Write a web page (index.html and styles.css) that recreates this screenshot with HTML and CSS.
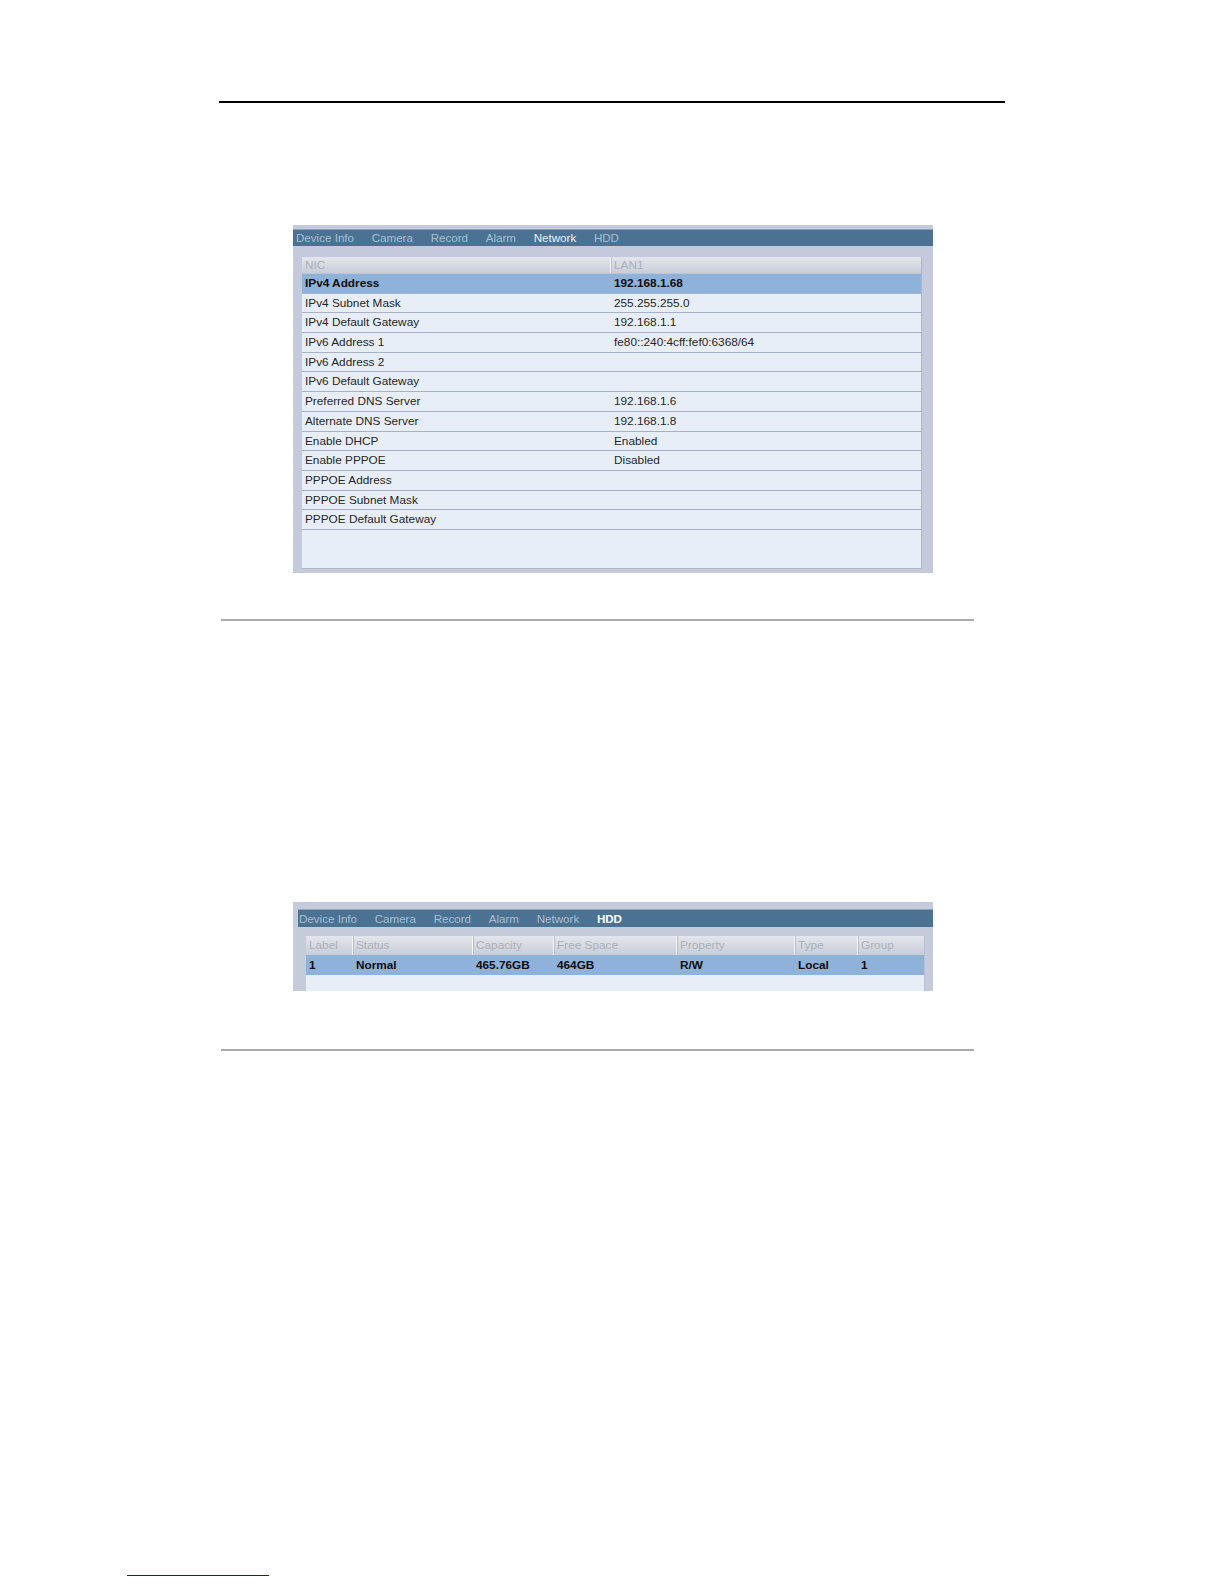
FILE: index.html
```html
<!DOCTYPE html>
<html>
<head>
<meta charset="utf-8">
<link rel="stylesheet" href="styles.css">
</head>
<body>
<div class="page">
  <div class="rule-top"></div>

  <div class="panel panel-net">
    <div class="tabs">
      <span class="tab">Device Info</span>
      <span class="tab">Camera</span>
      <span class="tab">Record</span>
      <span class="tab">Alarm</span>
      <span class="tab active">Network</span>
      <span class="tab">HDD</span>
    </div>
    <div class="panel-body">
      <div class="table net-table">
        <div class="row head"><span class="c1">NIC</span><span class="c2">LAN1</span></div>
        <div class="row sel"><span class="c1">IPv4 Address</span><span class="c2">192.168.1.68</span></div>
        <div class="row"><span class="c1">IPv4 Subnet Mask</span><span class="c2">255.255.255.0</span></div>
        <div class="row"><span class="c1">IPv4 Default Gateway</span><span class="c2">192.168.1.1</span></div>
        <div class="row"><span class="c1">IPv6 Address 1</span><span class="c2">fe80::240:4cff:fef0:6368/64</span></div>
        <div class="row"><span class="c1">IPv6 Address 2</span><span class="c2"></span></div>
        <div class="row"><span class="c1">IPv6 Default Gateway</span><span class="c2"></span></div>
        <div class="row"><span class="c1">Preferred DNS Server</span><span class="c2">192.168.1.6</span></div>
        <div class="row"><span class="c1">Alternate DNS Server</span><span class="c2">192.168.1.8</span></div>
        <div class="row"><span class="c1">Enable DHCP</span><span class="c2">Enabled</span></div>
        <div class="row"><span class="c1">Enable PPPOE</span><span class="c2">Disabled</span></div>
        <div class="row"><span class="c1">PPPOE Address</span><span class="c2"></span></div>
        <div class="row"><span class="c1">PPPOE Subnet Mask</span><span class="c2"></span></div>
        <div class="row"><span class="c1">PPPOE Default Gateway</span><span class="c2"></span></div>
      </div>
    </div>
  </div>

  <div class="sep sep-1"></div>

  <div class="panel panel-hdd">
    <div class="tabs">
      <span class="tab">Device Info</span>
      <span class="tab">Camera</span>
      <span class="tab">Record</span>
      <span class="tab">Alarm</span>
      <span class="tab">Network</span>
      <span class="tab active">HDD</span>
    </div>
    <div class="panel-body">
      <div class="table hdd-table">
        <div class="hrow head">
          <span>Label</span><span>Status</span><span>Capacity</span><span>Free Space</span><span>Property</span><span>Type</span><span>Group</span>
        </div>
        <div class="hrow sel">
          <span>1</span><span>Normal</span><span>465.76GB</span><span>464GB</span><span>R/W</span><span>Local</span><span>1</span>
        </div>
      </div>
    </div>
  </div>

  <div class="sep sep-2"></div>

  <div class="link-line"></div>
</div>
</body>
</html>
```

FILE: styles.css
```css
html, body {
  margin: 0;
  padding: 0;
  background: #ffffff;
}

.page {
  width: 1224px;
  height: 1584px;
  box-sizing: border-box;
  padding-top: 101px;
  overflow: hidden;
  font-family: "Liberation Sans", Arial, sans-serif;
}

.rule-top {
  margin-left: 219px;
  width: 786px;
  height: 2px;
  background: #000000;
}

/* ---------- panels ---------- */
.panel {
  margin-left: 293px;
  width: 640px;
  box-sizing: border-box;
  background: #c4c9db;
  display: flex;
  flex-direction: column;
}

.panel-net {
  margin-top: 122px;
  height: 348px;
  padding: 4px 0 4px 0;
}

.panel-hdd {
  margin-top: 281px;
  height: 89px;
  padding: 7px 0 0 5px;
  overflow: hidden;
  background: #c6cbdb;
}

.tabs {
  display: flex;
  gap: 17.7px;
  background: #4b7292;
  border-top: 1px solid #8ea4bb;
  box-sizing: border-box;
  padding-left: 3px;
  font-size: 11.6px;
  color: #a9bfd2;
  white-space: nowrap;
}

.panel-net .tabs {
  height: 17px;
  line-height: 16px;
}

.panel-hdd .tabs {
  height: 18px;
  line-height: 17px;
  padding-left: 1px;
}

.tab.active {
  color: #eef3f8;
}

.panel-hdd .tab.active {
  color: #ffffff;
  font-weight: bold;
}

.panel-body {
  flex: 1;
  display: flex;
  flex-direction: column;
}

.panel-net .panel-body {
  padding: 11px 11px 0 9px;
}

.panel-hdd .panel-body {
  padding: 9px 8px 0 8px;
}

.table {
  flex: 1;
  background: #e8eef8;
  font-size: 11.8px;
  color: #262626;
}

.net-table {
  border-right: 1px solid #aeb5c8;
  border-bottom: 1px solid #aeb5c8;
}

.hdd-table {
  border-right: 1px solid #b9bfd0;
}

/* ---------- network table ---------- */
.row {
  display: flex;
  height: 19.7px;
  line-height: 18px;
  box-sizing: border-box;
  border-bottom: 1px solid #a9b1c5;
  white-space: nowrap;
}

.row .c1 {
  width: 309px;
  padding-left: 3px;
  box-sizing: border-box;
}

.row .c2 {
  flex: 1;
  padding-left: 3px;
}

.row.head {
  height: 17px;
  line-height: 16px;
  background: linear-gradient(#e3e6ec, #c9cdd6);
  color: #aab0ba;
  border-bottom: 1px solid #c0c5d0;
}

.row.head .c1 {
  border-right: 1px solid #f4f6f9;
  box-shadow: 1px 0 0 #b8bdc8;
}

.row.sel {
  background: #8fb2da;
  color: #0d0d0d;
  font-weight: bold;
  border-bottom-color: #9fb6d2;
}

/* ---------- hdd table ---------- */
.hrow {
  display: grid;
  grid-template-columns: 47px 120px 81px 123px 118px 63px 1fr;
  white-space: nowrap;
}

.hrow span {
  padding-left: 3px;
}

.hrow.head {
  height: 19px;
  line-height: 18px;
  background: linear-gradient(#e3e6ec, #c9cdd6);
  color: #aab0ba;
}

.hrow.head span {
  border-right: 1px solid #f4f6f9;
  box-shadow: 1px 0 0 #b8bdc8;
}

.hrow.head span:last-child {
  border-right: 0;
  box-shadow: none;
}

.hrow.sel {
  height: 20px;
  line-height: 20px;
  background: #8fb2da;
  color: #0d0d0d;
  font-weight: bold;
}

/* ---------- separators ---------- */
.sep {
  margin-left: 221px;
  width: 753px;
  height: 2px;
  background: #ababab;
}

.sep-1 {
  margin-top: 46px;
}

.sep-2 {
  margin-top: 58px;
}

.link-line {
  margin-top: 524px;
  margin-left: 127px;
  width: 142px;
  height: 1px;
  background: #1c1c8a;
}
```
